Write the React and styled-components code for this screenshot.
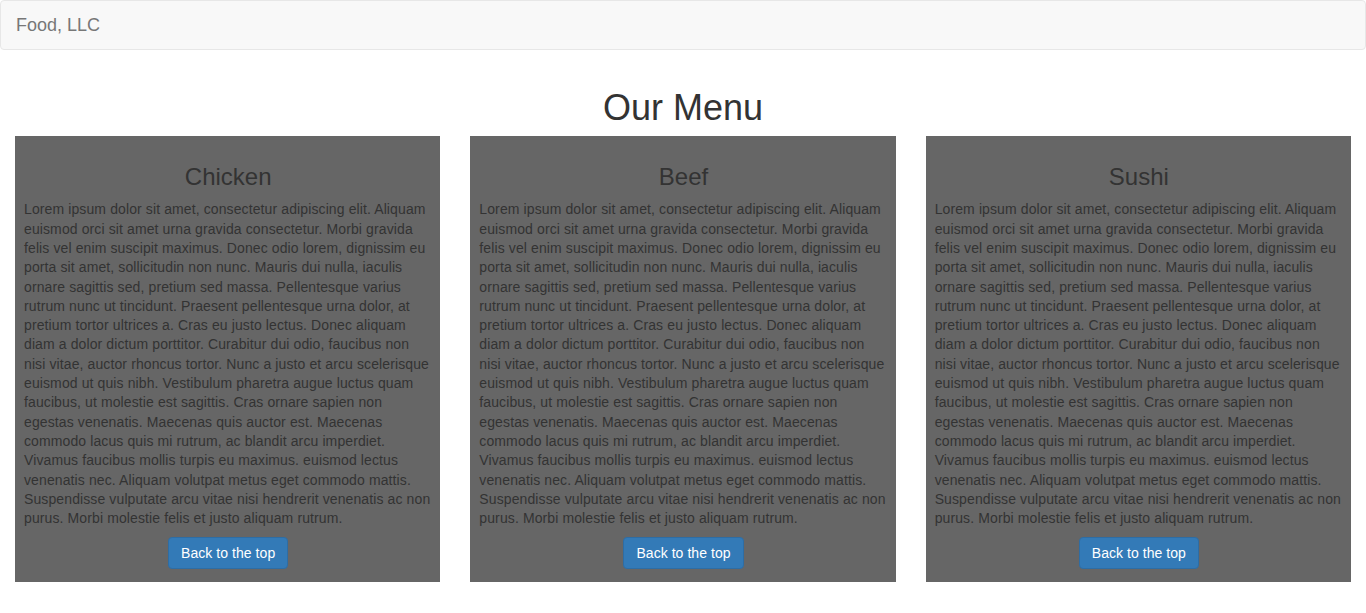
import React from "react";
import styled, { createGlobalStyle } from "styled-components";

const Global = createGlobalStyle`
  * { box-sizing: border-box; }
  html, body { margin: 0; padding: 0; background: #fff; }
  body {
    font-family: "Liberation Sans", Arial, Helvetica, sans-serif;
    font-size: 14px;
    line-height: 1.42857;
    color: #333;
  }
`;

const Navbar = styled.nav`
  height: 50px;
  background: #f8f8f8;
  border: 1px solid #e7e7e7;
  border-radius: 4px;
  display: flex;
  align-items: center;
`;

const Brand = styled.a`
  padding: 0 15px;
  font-size: 18px;
  line-height: 20px;
  color: #777;
  text-decoration: none;
`;

const Title = styled.h1`
  margin: 38px 0 8.4px;
  font-size: 36px;
  line-height: 39.6px;
  font-weight: 500;
  text-align: center;
  color: #333;
`;

const Row = styled.section`
  display: grid;
  grid-template-columns: repeat(3, 1fr);
  gap: 30px;
  padding: 0 15px;
`;

const Card = styled.article`
  background: #666;
  padding: 8px 8px 13px 9px;
  display: flex;
  flex-direction: column;
  align-items: center;
`;

const CardTitle = styled.h3`
  margin: 20px 0 10px;
  font-size: 24px;
  line-height: 26.4px;
  font-weight: 500;
  color: #333;
  text-align: center;
`;

const Text = styled.p`
  margin: 0;
  font-size: 14px;
  line-height: 19.3px;
  letter-spacing: 0.11px;
  color: #333;
  align-self: stretch;
`;

const Button = styled.a`
  margin-top: 9px;
  display: inline-block;
  padding: 6px 12px;
  font-size: 14px;
  line-height: 18px;
  letter-spacing: 0.05px;
  color: #fff;
  background: #337ab7;
  border: 1px solid #2e6da4;
  border-radius: 4px;
  text-decoration: none;
  white-space: nowrap;
`;

const lorem =
  "Lorem ipsum dolor sit amet, consectetur adipiscing elit. Aliquam euismod orci sit amet urna gravida consectetur. Morbi gravida felis vel enim suscipit maximus. Donec odio lorem, dignissim eu porta sit amet, sollicitudin non nunc. Mauris dui nulla, iaculis ornare sagittis sed, pretium sed massa. Pellentesque varius rutrum nunc ut tincidunt. Praesent pellentesque urna dolor, at pretium tortor ultrices a. Cras eu justo lectus. Donec aliquam diam a dolor dictum porttitor. Curabitur dui odio, faucibus non nisi vitae, auctor rhoncus tortor. Nunc a justo et arcu scelerisque euismod ut quis nibh. Vestibulum pharetra augue luctus quam faucibus, ut molestie est sagittis. Cras ornare sapien non egestas venenatis. Maecenas quis auctor est. Maecenas commodo lacus quis mi rutrum, ac blandit arcu imperdiet. Vivamus faucibus mollis turpis eu maximus. euismod lectus venenatis nec. Aliquam volutpat metus eget commodo mattis. Suspendisse vulputate arcu vitae nisi hendrerit venenatis ac non purus. Morbi molestie felis et justo aliquam rutrum.";

const items = ["Chicken", "Beef", "Sushi"];

export default function App() {
  return (
    <>
      <Global />
      <Navbar>
        <Brand href="#">Food, LLC</Brand>
      </Navbar>
      <Title>Our Menu</Title>
      <Row>
        {items.map((name) => (
          <Card key={name}>
            <CardTitle>{name}</CardTitle>
            <Text>{lorem}</Text>
            <Button href="#">Back to the top</Button>
          </Card>
        ))}
      </Row>
    </>
  );
}
